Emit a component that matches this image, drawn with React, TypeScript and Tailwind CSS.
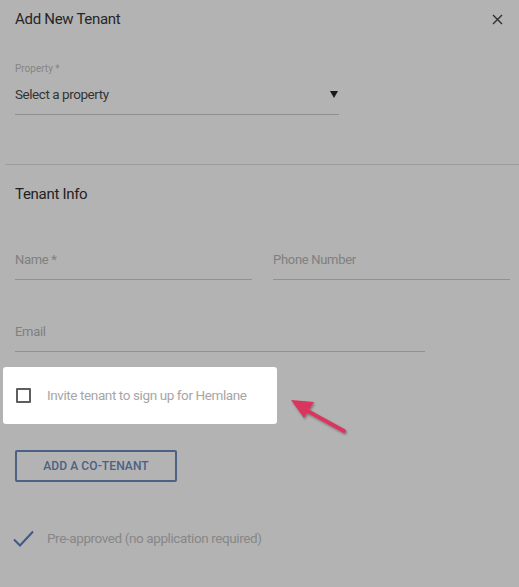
import React from "react";

const font = { fontFamily: "Roboto, 'Noto Sans', sans-serif" };

function Field({ label, className }: { label: string; className: string }) {
  return (
    <div className={className}>
      <div className="h-[20px] text-[13px] leading-[20px] text-[#808080] tracking-[-0.3px]">{label}</div>
      <div className="mt-[9px] h-px bg-[#919191]" />
    </div>
  );
}

export default function App() {
  return (
    <div style={font} className="relative w-[519px] h-[587px] bg-[#b3b3b3] overflow-hidden">
      <div className="flex items-center justify-between h-[38px] pl-[15px] pr-[15px]">
        <span className="text-[15px] text-[#262626] tracking-[-0.3px]">Add New Tenant</span>
        <svg width="11" height="11" viewBox="0 0 11 11" className="mr-[1px]">
          <path d="M1 1L10 10M10 1L1 10" stroke="#2e2e2e" strokeWidth="1.4" />
        </svg>
      </div>

      <div className="ml-[15px] w-[324px] mt-[25px]">
        <div className="text-[10px] leading-[12px] text-[#858585]">Property *</div>
        <div className="mt-[12px] flex items-center justify-between h-[14px]">
          <span className="text-[13.5px] text-[#333] tracking-[-0.45px]">Select a property</span>
          <svg width="8" height="7" viewBox="0 0 8 7" className="mr-[1px]">
            <path d="M0 0H8L4 7Z" fill="#1a1a1a" />
          </svg>
        </div>
        <div className="mt-[13px] h-px bg-[#8f8f8f]" />
      </div>

      <div className="ml-[5px] mt-[49px] h-px bg-[#9c9c9c]" />

      <div className="ml-[15px] mt-[20px] text-[15px] leading-[18px] text-[#222] tracking-[-0.3px]">Tenant Info</div>

      <div className="flex gap-[21px] ml-[15px] w-[495px] mt-[47px]">
        <Field label="Name *" className="flex-1" />
        <Field label="Phone Number" className="flex-1" />
      </div>

      <Field label="Email" className="ml-[15px] w-[410px] mt-[42px]" />

      <div className="ml-[3px] mt-[15px] w-[274px] h-[57px] bg-white rounded-[3px] flex items-center">
        <div className="ml-[13px] w-[15px] h-[15px] border-2 border-[#5e5e5e] rounded-[1px]" />
        <span className="ml-[16px] text-[13.5px] text-[#a6a6a6] tracking-[-0.4px] -mt-[1px]">Invite tenant to sign up for Hemlane</span>
      </div>

      <button className="ml-[15px] mt-[26px] w-[162px] h-[32px] border-2 border-[#4b6185] rounded-[2px] text-[12px] font-medium text-[#4b6185] tracking-[0.1px] flex items-center justify-center">
        ADD A CO-TENANT
      </button>

      <div className="ml-[13px] mt-[46px] flex items-center h-[20px]">
        <svg width="21" height="17" viewBox="0 0 21 17">
          <path d="M1 9.5L7 15.5L20 1.5" fill="none" stroke="#40598a" strokeWidth="2" />
        </svg>
        <span className="ml-[13px] text-[13.5px] text-[#878787] tracking-[-0.4px]">Pre-approved (no application required)</span>
      </div>

      <svg className="absolute left-[286px] top-[394px]" width="66" height="46" viewBox="0 0 66 46">
        <defs>
          <filter id="sh" x="-20%" y="-20%" width="140%" height="140%">
            <feDropShadow dx="1" dy="1.5" stdDeviation="1.2" floodColor="#000" floodOpacity="0.35" />
          </filter>
        </defs>
        <g filter="url(#sh)">
          <path d="M58 37L16 14" stroke="#d8345f" strokeWidth="4" strokeLinecap="round" />
          <path d="M5 6L28 8L18 24Z" fill="#d8345f" />
        </g>
      </svg>
    </div>
  );
}
